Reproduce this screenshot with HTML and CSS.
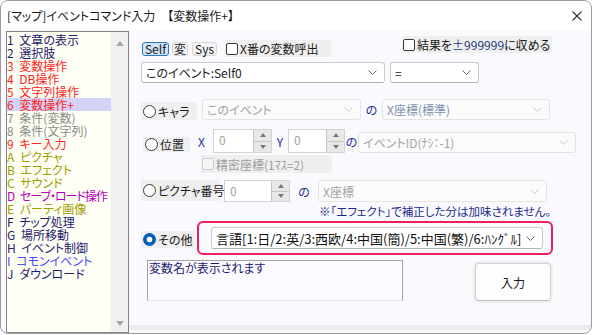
FILE: index.html
```html
<!DOCTYPE html>
<html lang="ja">
<head>
<meta charset="UTF-8">
<title>[マップ]イベントコマンド入力</title>
<link rel="stylesheet" href="styles.css">
</head>
<body>
<div class="window">
    <div class="titlebar">
        <span class="title">[マップ]イベントコマンド入力　【変数操作+】</span>
        <svg class="close" width="10" height="10" viewBox="0 0 10 10">
            <path d="M0.5 0.5 L9.5 9.5 M9.5 0.5 L0.5 9.5" stroke="#333" stroke-width="1.1"/>
        </svg>
    </div>
    <div class="content">
        <div class="cmdlist">
            <ul class="items">
                <li class="navy">1 文章の表示</li>
                <li class="navy">2 選択肢</li>
                <li class="red">3 変数操作</li>
                <li class="red">4 DB操作</li>
                <li class="red">5 文字列操作</li>
                <li class="red sel">6 変数操作+</li>
                <li class="gray">7 条件(変数)</li>
                <li class="gray">8 条件(文字列)</li>
                <li class="red">9 キー入力</li>
                <li class="olive">A ピクチャ</li>
                <li class="olive">B エフェクト</li>
                <li class="olive">C サウンド</li>
                <li class="magenta tight">D セーブ・ロード操作</li>
                <li class="olive">E パーティ画像</li>
                <li class="navy">F チップ処理</li>
                <li class="navy">G 場所移動</li>
                <li class="navy">H イベント制御</li>
                <li class="blue">I コモンイベント</li>
                <li class="navy">J ダウンロード</li>
            </ul>
            <div class="scroll">
                <span class="arr up"></span>
                <span class="arr down"></span>
            </div>
        </div>

        <div class="panel">
            <div class="form">
                <div class="row row-top">
                    <span class="tog on self">Self</span>
                    <span class="tog hen">変</span>
                    <span class="tog sys">Sys</span>
                    <label class="chk xban"><span class="box"></span>X番の変数呼出</label>
                    <label class="chk clamp"><span class="box"></span>結果を<span class="num">±999999</span>に収める</label>
                </div>

                <div class="row row-var">
                    <div class="combo w-var">このイベント:Self0<svg class="chev" width="9" height="5" viewBox="0 0 9 5"><path d="M0.5 0.5 L4.5 4.5 L8.5 0.5" fill="none" stroke="#666"/></svg></div>
                    <div class="combo w-op">=<svg class="chev" width="9" height="5" viewBox="0 0 9 5"><path d="M0.5 0.5 L4.5 4.5 L8.5 0.5" fill="none" stroke="#666"/></svg></div>
                </div>

                <div class="row row-chara">
                    <label class="opt w-chara"><span class="radio"></span>キャラ</label>
                    <div class="combo off w-ev">このイベント<svg class="chev" width="9" height="5" viewBox="0 0 9 5"><path d="M0.5 0.5 L4.5 4.5 L8.5 0.5" fill="none" stroke="#c8c8c8"/></svg></div>
                    <span class="no w20">の</span>
                    <div class="combo off w-xy"><span class="slate">X座標(標準)</span><svg class="chev" width="9" height="5" viewBox="0 0 9 5"><path d="M0.5 0.5 L4.5 4.5 L8.5 0.5" fill="none" stroke="#c8c8c8"/></svg></div>
                </div>

                <div class="row row-pos">
                    <label class="opt w-pos"><span class="radio"></span>位置</label>
                    <span class="no axis-x">X</span>
                    <div class="spin w-sx"><span class="val">0</span><span class="btns"><span><i class="tri up"></i></span><span><i class="tri down"></i></span></span></div>
                    <span class="no axis-y">Y</span>
                    <div class="spin w-sy"><span class="val">0</span><span class="btns"><span><i class="tri up"></i></span><span><i class="tri down"></i></span></span></div>
                    <span class="no w13">の</span>
                    <div class="combo off w-id">イベントID(ﾅｼ：-1)<svg class="chev" width="9" height="5" viewBox="0 0 9 5"><path d="M0.5 0.5 L4.5 4.5 L8.5 0.5" fill="none" stroke="#c8c8c8"/></svg></div>
                </div>

                <div class="row row-fine">
                    <label class="chk off"><span class="box"></span>精密座標(1ﾏｽ=2)</label>
                </div>

                <div class="row row-pic">
                    <label class="opt w-pic"><span class="radio"></span>ピクチャ番号</label>
                    <div class="spin w-sp"><span class="val">0</span><span class="btns"><span><i class="tri up"></i></span><span><i class="tri down"></i></span></span></div>
                    <span class="no w28">の</span>
                    <div class="combo off w-px">X座標<svg class="chev" width="9" height="5" viewBox="0 0 9 5"><path d="M0.5 0.5 L4.5 4.5 L8.5 0.5" fill="none" stroke="#c8c8c8"/></svg></div>
                </div>

                <p class="note">※「エフェクト」で補正した分は加味されません。</p>

                <div class="row row-other">
                    <label class="opt w-other"><span class="radio on"></span>その他</label>
                    <div class="focus">
                        <div class="combo w-lang">言語[1:日/2:英/3:西欧/4:中国(簡)/5:中国(繁)/6:ﾊﾝｸﾞﾙ]<svg class="chev" width="9" height="5" viewBox="0 0 9 5"><path d="M0.5 0.5 L4.5 4.5 L8.5 0.5" fill="none" stroke="#666"/></svg></div>
                    </div>
                </div>

                <div class="row row-bottom">
                    <div class="desc">変数名が表示されます</div>
                    <button class="btn">入力</button>
                </div>
            </div>
            <div class="band"></div>
        </div>
    </div>
</div>
</body>
</html>
```

FILE: styles.css
```css
* {
    box-sizing: border-box;
}

body {
    margin: 0;
    font-family: "Noto Sans CJK JP", "Noto Sans", sans-serif;
    font-size: 12px;
    color: #1a1a1a;
    background: #ffffff;
}

.window {
    width: 592px;
    height: 334px;
    border: 1px solid #9c9c9c;
    border-radius: 8px;
    overflow: hidden;
    background: #f9f9fe;
    display: flex;
    flex-direction: column;
}

.titlebar {
    height: 29px;
    flex: none;
    background: #ffffff;
    display: flex;
    align-items: center;
    padding-left: 6px;
    font-feature-settings: "palt";
}

.close {
    margin-left: auto;
    margin-right: 9px;
}

.content {
    flex: 1;
    display: flex;
}

/* command list */
.cmdlist {
    width: 123px;
    margin: 1px 0 0 5px;
    border: 1px solid #858585;
    background: #fefff4;
    display: flex;
}

.items {
    list-style: none;
    margin: 0;
    padding: 1px 0 0 0;
    flex: 1;
    min-width: 0;
}

.items li {
    height: 13px;
    line-height: 13px;
    white-space: nowrap;
    word-spacing: 3px;
    font-feature-settings: "palt";
}

.items li.sel {
    background: #d3d3f6;
}

.items li.tight {
    letter-spacing: -1px;
    word-spacing: 4px;
}

.navy { color: #1e206e; }
.red { color: #ff2424; }
.gray { color: #8a8a8a; }
.olive { color: #9d9d00; }
.magenta { color: #b400b4; }
.blue { color: #4a4aff; }

.scroll {
    width: 17px;
    flex: none;
    background: #f0f0f0;
    display: flex;
    flex-direction: column;
    justify-content: space-between;
    align-items: center;
    padding: 9px 0 6px;
}

.arr {
    width: 0;
    height: 0;
    border-left: 4px solid transparent;
    border-right: 4px solid transparent;
}

.arr.up {
    border-bottom: 5px solid #a6a6a6;
}

.arr.down {
    border-top: 5px solid #a6a6a6;
}

/* right panel */
.panel {
    flex: 1;
    display: flex;
    flex-direction: column;
}

.form {
    padding: 6px 0 0 12px;
}

.row {
    display: flex;
    align-items: flex-start;
}

.row-top { height: 21px; }

.tog {
    height: 14px;
    margin-top: 6px;
    border: 1px solid #d6d6d6;
    border-radius: 3px;
    background: #f4f4f4;
    line-height: 11px;
    text-align: center;
}

.tog.on {
    background: #cde3f7;
    border-color: #3373c4;
}

.self { width: 27px; margin-left: 1px; }
.hen { width: 16px; margin-left: 3px; }
.sys { width: 25px; margin-left: 4px; }

.chk {
    display: flex;
    align-items: center;
    background: #efefef;
    height: 17px;
    white-space: nowrap;
    font-feature-settings: "palt";
}

.box {
    width: 12px;
    height: 12px;
    border: 1px solid #3a3a3a;
    border-radius: 2px;
    background: #ffffff;
    margin: 0 2px 0 1px;
}

.xban { width: 106px; margin: 4px 0 0 8px; }
.clamp { width: 150px; margin-left: 71px; }
.num { color: #1d3a7a; }

.chk.off {
    color: #9c9c9c;
    width: 131px;
    height: 18px;
}

.chk.off .box {
    border-color: #cfcfcf;
    background: #f4f4f4;
}

.row-var { margin-top: 5px; }

.combo {
    height: 21px;
    background: #ffffff;
    border: 1px solid #cbcbcb;
    border-bottom-color: #b3b3b3;
    border-radius: 3px;
    display: flex;
    align-items: center;
    padding: 0 7px 0 4px;
    white-space: nowrap;
    font-feature-settings: "palt";
}

.combo .chev {
    margin-left: auto;
    flex: none;
}

.combo.off {
    background: #fbfbfb;
    border-color: #e4e4e4;
    color: #a3a3a3;
}

.slate { color: #8290b0; }

.w-var { width: 244px; }
.w-op { width: 89px; margin-left: 5px; }

.row-chara { margin-top: 16px; height: 21px; }

.opt {
    display: flex;
    align-items: center;
    background: #efefef;
    height: 18px;
    padding-left: 2px;
    white-space: nowrap;
    font-feature-settings: "palt";
}

.radio {
    width: 13px;
    height: 13px;
    border: 1px solid #3a3a3a;
    border-radius: 50%;
    background: #ffffff;
    margin-right: 2px;
    flex: none;
}

.radio.on {
    border: none;
    background: radial-gradient(circle, #ffffff 0 2.6px, #005fb8 3.2px);
}

.w-chara { width: 56px; margin-top: 3px; }
.w-ev { width: 159px; margin-left: 5px; }

.no {
    color: #262f8f;
    text-align: center;
    align-self: center;
}

.w20 { width: 21px; }
.w13 { width: 13px; }
.w28 { width: 28px; }

.w-xy { width: 168px; }

.row-pos { margin-top: 9px; height: 24px; }

.w-pos { width: 47px; height: 15px; margin: 8px 0 0 2px; }
.axis-x { width: 23px; }
.axis-y { width: 16px; }

.spin {
    display: flex;
    height: 24px;
    border: 1px solid #d3d3d3;
    background: #ffffff;
}

.spin .val {
    flex: 1;
    padding-left: 5px;
    line-height: 20px;
    color: #a5a5a5;
}

.spin .btns {
    width: 18px;
    display: flex;
    flex-direction: column;
}

.spin .btns span {
    flex: 1;
    background: #e8e8e8;
    border-left: 1px solid #c6c6c6;
    display: flex;
    align-items: center;
    justify-content: center;
}

.spin .btns span + span {
    border-top: 1px solid #c6c6c6;
}

.tri {
    width: 0;
    height: 0;
    border-left: 3px solid transparent;
    border-right: 3px solid transparent;
}

.tri.up { border-bottom: 4px solid #7a7a7a; }
.tri.down { border-top: 4px solid #7a7a7a; }

.w-sx { width: 59px; }
.w-sy { width: 57px; }
.w-id { width: 218px; margin-top: 3px; }

.row-fine { margin: 2px 0 0 60px; }

.row-pic { margin-top: 7px; height: 22px; }

.w-pic { width: 79px; height: 21px; }
.w-sp { width: 66px; height: 22px; margin-left: 4px; }
.w-sp .val { line-height: 19px; }
.w-px { width: 229px; height: 22px; }

.note {
    margin: 3px 0 0 178px;
    line-height: 12px;
    font-size: 11.5px;
    color: #1c2a8a;
    white-space: nowrap;
    font-feature-settings: "palt";
}

.row-other { margin-top: 4px; }

.w-other { width: 54px; height: 17px; margin-top: 10px; }

.focus {
    width: 356px;
    height: 34px;
    margin-left: 2px;
    border: 2px solid #ee1f5c;
    border-radius: 6px;
    padding: 4px 8px 0 12px;
}

.w-lang {
    width: 332px;
    height: 22px;
    font-size: 13px;
    color: #111111;
}

.row-bottom { margin-top: 5px; }

.desc {
    width: 256px;
    height: 41px;
    margin-left: 6px;
    border: 1px solid #a3a3a3;
    border-bottom-color: #e6e6e6;
    background: #fafaff;
    color: #1e206e;
    padding: 0 1px;
    line-height: 14px;
    font-feature-settings: "palt";
}

.btn {
    width: 76px;
    height: 38px;
    margin: 3px 0 0 72px;
    border: 1px solid #d0d0d0;
    border-bottom-color: #bdbdbd;
    border-radius: 4px;
    background: #fdfdfd;
    box-shadow: 0 0 0 2px #efefef;
    font-family: inherit;
    font-size: 12px;
    color: #1a1a1a;
}

.band {
    margin-top: auto;
    margin-bottom: 3px;
    height: 5px;
    background: #ececef;
}
```
